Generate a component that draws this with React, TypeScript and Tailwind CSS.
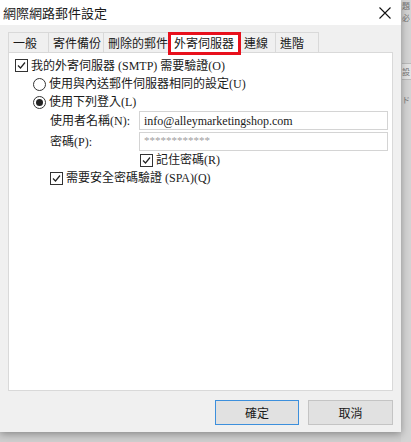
import React from "react";

const F = { fontFamily: '"Liberation Serif", "Noto Sans CJK TC", serif' };
const FS = { fontFamily: '"Noto Sans CJK TC", "Liberation Sans", sans-serif' };

function Check({ checked }: { checked: boolean }) {
  return (
    <span className="inline-flex w-[13px] h-[13px] border border-[#333] bg-white items-center justify-center shrink-0">
      {checked && (
        <svg width="11" height="11" viewBox="0 0 11 11">
          <path d="M2 5.5 L4.5 8 L9 2.5" fill="none" stroke="#222" strokeWidth="1.2" />
        </svg>
      )}
    </span>
  );
}

function Radio({ checked }: { checked: boolean }) {
  return (
    <span className="inline-flex w-[13px] h-[13px] rounded-full border border-[#333] bg-white items-center justify-center shrink-0">
      {checked && <span className="w-[7px] h-[7px] rounded-full bg-[#222]" />}
    </span>
  );
}

export default function App() {
  const tabs = [
    { t: "一般", w: 41 },
    { t: "寄件備份", w: 55 },
    { t: "刪除的郵件", w: 66 },
    { t: "外寄伺服器", w: 70, active: true },
    { t: "連線", w: 36 },
    { t: "進階", w: 43 },
  ];
  return (
    <div className="w-[411px] h-[442px] bg-[#cfcfcf] flex overflow-hidden text-[#1a1a1a]" style={F}>
      <div className="w-[401px] h-[432px] flex flex-col bg-[#f0f0f0] shrink-0 shadow-[0_2px_8px_rgba(0,0,0,0.35)] relative z-10">
        <div className="h-[25px] bg-white flex items-center justify-between pl-[3px] pr-[9px]">
          <span className="text-[13px] leading-none" style={FS}>網際網路郵件設定</span>
          <svg width="14" height="14" viewBox="0 0 14 14">
            <path d="M1.5 1.5 L12.5 12.5 M12.5 1.5 L1.5 12.5" stroke="#111" strokeWidth="1.1" />
          </svg>
        </div>
        <div className="pl-[8px] pr-[8px] pt-[7px] flex flex-col">
          <div className="flex h-[20px] relative">
            {tabs.map((tb) => (
              <div
                key={tb.t}
                className={
                  "h-[20px] flex items-center pl-[4px] text-[12px] whitespace-nowrap border-t border-r border-[#d9d9d9] " +
                  (tb.t === "一般" ? "border-l " : "") +
                  (tb.active ? "bg-white" : "bg-[#f0f0f0]")
                }
                style={{ width: tb.w, ...FS }}
              >
                {tb.t}
              </div>
            ))}
            <div className="absolute left-[160px] top-[0px] w-[73px] h-[23px] border-[3px] border-[#e8101c] z-20" />
          </div>
          <div className="w-[385px] h-[339px] bg-white border border-[#d9d9d9] pt-[3px] text-[12px] leading-[18px]">
            <div className="flex items-center gap-[3px] pl-[6px] h-[19px]">
              <Check checked />
              <span>我的外寄伺服器 (SMTP) 需要驗證(O)</span>
            </div>
            <div className="flex items-center gap-[3px] pl-[24px] h-[18px]">
              <Radio checked={false} />
              <span>使用與內送郵件伺服器相同的設定(U)</span>
            </div>
            <div className="flex items-center gap-[3px] pl-[24px] h-[18px]">
              <Radio checked />
              <span>使用下列登入(L)</span>
            </div>
            <div className="flex items-center pl-[41px] h-[19px]">
              <span className="w-[89px]">使用者名稱(N):</span>
              <div className="w-[249px] h-[19px] border border-[#d4d4d4] flex items-center pl-[4px]">
                info@alleymarketingshop.com
              </div>
            </div>
            <div className="flex items-center pl-[41px] mt-[2px] h-[19px]">
              <span className="w-[89px]">密碼(P):</span>
              <div className="w-[249px] h-[19px] border border-[#d4d4d4] flex items-start pl-[4px] text-[#a0a0a0] text-[11px] leading-[14px]">
                ************
              </div>
            </div>
            <div className="flex items-center gap-[3px] pl-[131px] h-[18px]">
              <Check checked />
              <span>記住密碼(R)</span>
            </div>
            <div className="flex items-center gap-[3px] pl-[41px] h-[18px]">
              <Check checked />
              <span>需要安全密碼驗證 (SPA)(Q)</span>
            </div>
          </div>
          <div className="flex justify-end gap-[9px] mt-[9px] pr-[0px]">
            <div className="w-[84px] h-[25px] border border-[#3c8fdc] bg-[#e1e1e1] flex items-center justify-center text-[12px]" style={FS}>確定</div>
            <div className="w-[85px] h-[25px] border border-[#c4c4c4] bg-[#e1e1e1] flex items-center justify-center text-[12px]" style={FS}>取消</div>
          </div>
        </div>
      </div>
      <div className="flex-1 flex flex-col items-start text-[8px] text-[#777] overflow-hidden bg-[#d4d4d4] pl-[1px]" style={FS}>
        <div className="h-[12px] leading-[12px] overflow-hidden">題</div>
        <div className="h-[12px] leading-[12px] overflow-hidden">必</div>
        <div className="mt-[39px] h-[17px] w-full border-y border-[#bbb] bg-[#e4e4e4] leading-[15px]">設</div>
        <div className="mt-[14px]">ド</div>
      </div>
    </div>
  );
}
